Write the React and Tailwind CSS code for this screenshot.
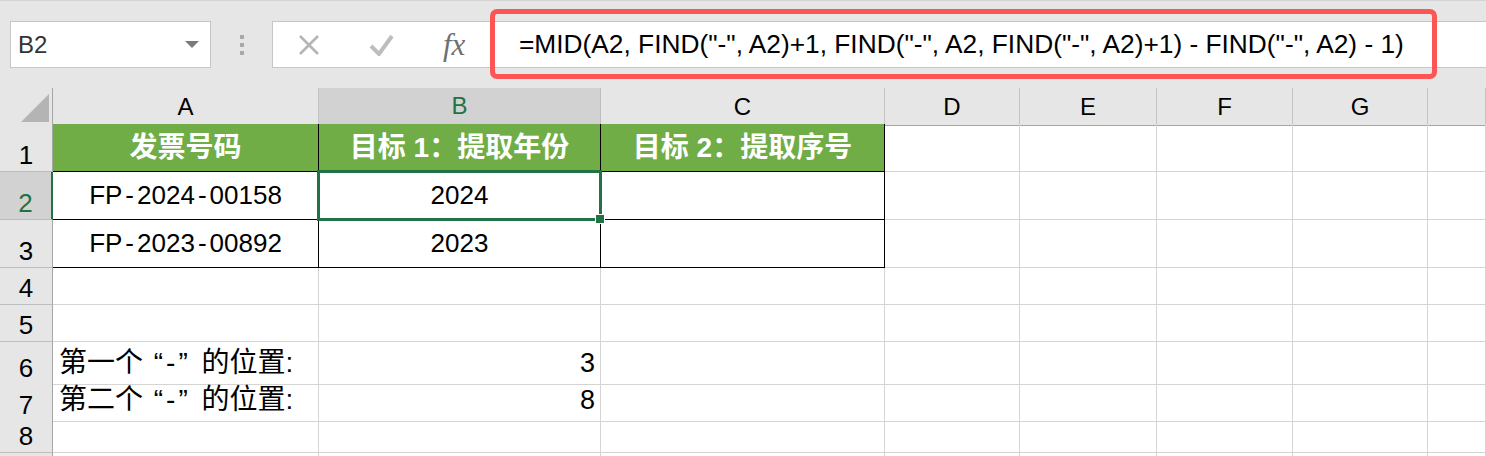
import React from 'react';

const grid = 'grid grid-cols-[53px_266px_282px_284px_135px_137px_136px_135px_1fr]';
const font = "font-['Liberation_Sans','Noto_Sans_CJK_SC',sans-serif]";

const RowHead = ({ n, active }) => (
  <div
    className={`flex items-end justify-center pb-[3px] text-[26px] leading-none border-b border-b-[#bdbdbd] ${
      active
        ? 'bg-[#d2d2d2] text-[#217346] border-r-2 border-r-[#217346]'
        : 'bg-[#e6e6e6] text-black border-r border-r-[#a6a6a6]'
    }`}
  >
    {n}
  </div>
);

const Empty = () => <div className="border-r border-b border-[#d4d4d4]" />;

const GreenHead = ({ children }) => (
  <div className="bg-[#70ad47] border-r border-b border-black flex items-center justify-center text-white font-bold text-[28px] whitespace-nowrap">
    {children}
  </div>
);

const TableCell = ({ children }) => (
  <div className="border-r border-b border-black flex items-center justify-center text-[26px] text-black whitespace-nowrap">
    {children}
  </div>
);

// invoice numbers: the sheet font sets hyphens wider than Arial does
const Invoice = ({ value }) => {
  const parts = value.split('-');
  return (
    <span>
      {parts.map((p, i) => (
        <React.Fragment key={i}>
          {i > 0 && <span className="mx-[3px]">-</span>}
          {p}
        </React.Fragment>
      ))}
    </span>
  );
};

const Toolbar = () => (
  <div className="relative h-[88px] bg-[#e6e6e6] border-t border-[#d4d4d4] flex items-start pt-[20px]">
    {/* name box */}
    <div className="ml-[10px] w-[201px] h-[47px] bg-white border border-[#c6c6c6] flex items-center justify-between pl-[7px] pr-[11px]">
      <span className="text-[24px] text-[#333] leading-none">B2</span>
      <svg width="14" height="7" viewBox="0 0 14 7">
        <polygon points="0,0 14,0 7,7" fill="#7a7a7a" />
      </svg>
    </div>

    {/* grip */}
    <div className="w-[61px] h-[47px] flex flex-col items-center justify-center gap-[4px]">
      <div className="w-[4px] h-[4px] bg-[#a8a8a8]" />
      <div className="w-[4px] h-[4px] bg-[#a8a8a8]" />
      <div className="w-[4px] h-[4px] bg-[#a8a8a8]" />
    </div>

    {/* formula bar */}
    <div className="flex-1 h-[47px] bg-white border border-r-0 border-[#c6c6c6] flex items-center">
      <div className="w-[218px] h-full flex items-center pl-[25px]">
        <svg width="22" height="20" viewBox="0 0 22 20">
          <path d="M2 1 L20 19 M20 1 L2 19" stroke="#b5b5b5" strokeWidth="2.6" fill="none" />
        </svg>
        <svg className="ml-[49px]" width="25" height="22" viewBox="0 0 25 22">
          <path d="M2 12 L10 20 L23 2" stroke="#bdbdbd" strokeWidth="4" fill="none" />
        </svg>
        <span className="ml-[49px] font-['Liberation_Serif',serif] italic text-[31px] text-[#6f6f6f] leading-none pr-[2px]">
          fx
        </span>
      </div>
      <div className="pl-[28px] text-[26.3px] text-black whitespace-nowrap leading-none">
        =MID(A2, FIND("-", A2)+1, FIND("-", A2, FIND("-", A2)+1) - FIND("-", A2) - 1)
      </div>
    </div>

    {/* highlight annotation */}
    <div className="absolute left-[490px] top-[8px] w-[947px] h-[70px] border-[5px] border-[#fb5555] rounded-[7px] pointer-events-none" />
  </div>
);

const ColHeader = () => {
  const letters = ['A', 'B', 'C', 'D', 'E', 'F', 'G', ''];
  return (
    <div className={`${grid} h-[36px]`}>
      <div className="bg-[#e6e6e6] border-r border-b border-[#a6a6a6] flex items-end justify-end pr-[3px] pb-[3px]">
        <svg width="28" height="28" viewBox="0 0 28 28">
          <polygon points="28,0 28,28 0,28" fill="#b4b4b4" />
        </svg>
      </div>
      {letters.map((l, i) =>
        l === 'B' ? (
          <div
            key={i}
            className="bg-[#d2d2d2] border-r border-r-[#bdbdbd] border-b-2 border-b-[#217346] flex items-center justify-center text-[24px] text-[#217346]"
          >
            {l}
          </div>
        ) : (
          <div
            key={i}
            className="bg-[#e6e6e6] border-r border-r-[#c3c3c3] border-b border-b-[#a6a6a6] flex items-center justify-center text-[24px] text-black"
          >
            {l}
          </div>
        )
      )}
    </div>
  );
};

const TailCells = () => (
  <>
    <Empty />
    <Empty />
    <Empty />
    <Empty />
    <Empty />
  </>
);

export default function App() {
  const lower = [
    { n: 4 },
    { n: 5 },
    { n: 6, first: '第一个', value: '3' },
    { n: 7, first: '第二个', value: '8' },
    { n: 8 },
    { n: '' },
  ];

  return (
    <div className={`w-[1486px] h-[456px] overflow-hidden bg-white ${font}`}>
      <Toolbar />
      <ColHeader />

      <div className={`${grid} h-[48px]`}>
        <RowHead n={1} />
        <GreenHead>发票号码</GreenHead>
        <GreenHead>目标 1：提取年份</GreenHead>
        <GreenHead>目标 2：提取序号</GreenHead>
        <TailCells />
      </div>

      <div className={`${grid} h-[48px]`}>
        <RowHead n={2} active />
        <TableCell>
          <Invoice value="FP-2024-00158" />
        </TableCell>
        <div className="relative border-r border-b border-black flex items-center justify-center text-[26px] text-black">
          2024
          <div className="absolute -left-[2px] -top-[2px] -right-[2px] -bottom-[2px] border-[3px] border-[#217346] z-10" />
          <div className="absolute -right-[5px] -bottom-[5px] w-[10px] h-[10px] bg-[#217346] border border-white z-20" />
        </div>
        <TableCell />
        <TailCells />
      </div>

      <div className={`${grid} h-[48px]`}>
        <RowHead n={3} />
        <TableCell>
          <Invoice value="FP-2023-00892" />
        </TableCell>
        <TableCell>2023</TableCell>
        <TableCell />
        <TailCells />
      </div>

      {lower.map((r, idx) => (
        <div key={idx} className={`${grid} h-[37px]`}>
          <RowHead n={r.n} />
          <div className="border-r border-b border-[#d4d4d4] flex items-center pl-[6px] text-[28px] text-black whitespace-pre">
            {r.first && (
              <span>
                {r.first}
                <span className="tracking-[3px]">{' “-” '}</span>
                的位置:
              </span>
            )}
          </div>
          <div className="border-r border-b border-[#d4d4d4] flex items-center justify-end pr-[5px] text-[27px] text-black">
            {r.value}
          </div>
          <Empty />
          <TailCells />
        </div>
      ))}
    </div>
  );
}
